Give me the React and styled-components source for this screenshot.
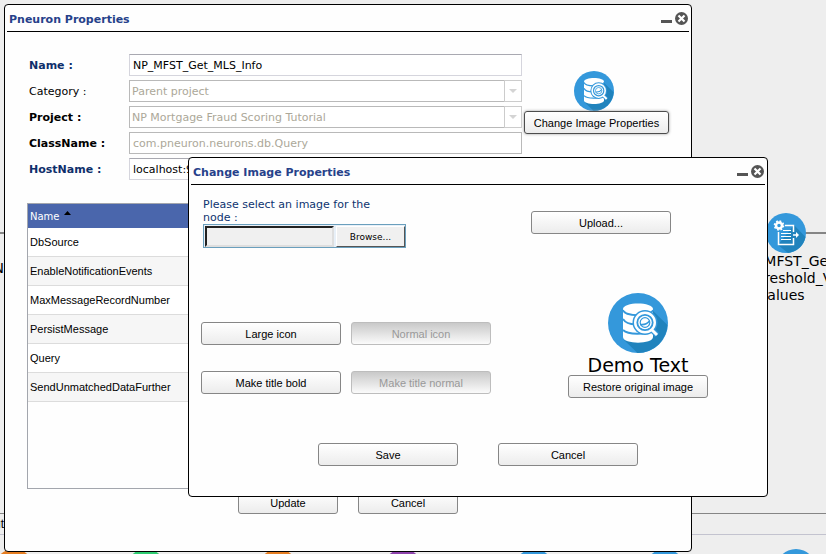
import React, { useRef, useState } from "react";
import styled, { createGlobalStyle } from "styled-components";

const GlobalStyle = createGlobalStyle`
  * { box-sizing: border-box; }
  body {
    margin: 0;
    background: #eeeeee;
    color: #000;
    font-family: "DejaVu Sans", sans-serif;
    font-size: 11px;
  }
`;

const Desktop = styled.main`
  position: relative;
  min-height: 100vh;
  overflow: hidden;
`;

const Connector = styled.div`
  position: absolute;
  left: 0;
  right: 0;
  top: ${(p) => p.$y}px;
  height: ${(p) => p.$weight}px;
  background: ${(p) => p.$color};
`;

const NodeDot = styled.div`
  position: absolute;
  left: ${(p) => p.$x}px;
  top: 549px;
  width: 40px;
  height: 40px;
  border-radius: 50%;
  background: ${(p) => p.$color};
`;

const CanvasNode = styled.div`
  position: absolute;
  left: ${(p) => p.$x}px;
  top: ${(p) => p.$y}px;
  width: 120px;
  display: flex;
  flex-direction: column;
  align-items: center;
  font-size: 14px;
  line-height: 17px;
  text-align: center;
`;

const CanvasText = styled.span`
  position: absolute;
  right: calc(100% - 4px);
  top: ${(p) => p.$y}px;
  font-family: ${(p) => (p.$label ? '"Liberation Sans", sans-serif' : "inherit")};
  font-size: ${(p) => (p.$label ? 12 : 14)}px;
  line-height: 17px;
`;

const Window = styled.section`
  position: absolute;
  left: ${(p) => p.$left}px;
  right: ${(p) => p.$right}px;
  top: ${(p) => p.$top}px;
  display: flex;
  flex-direction: column;
  background: #fefefe;
  border: 1px solid #000;
  border-radius: 4px;
`;

const TitleBar = styled.header`
  display: flex;
  align-items: center;
  height: 27px;
  margin: 0 2px;
  padding: 2px 1px 0 2px;
  border-bottom: 1px solid #000;
`;

const Title = styled.h2`
  flex: 1;
  margin: 0;
  padding-top: 2px;
  font-size: 11px;
  line-height: 14px;
  color: #26418a;
`;

const WindowButton = styled.button`
  display: flex;
  padding: 0;
  border: 0;
  background: none;
`;

const Button = styled.button`
  width: ${(p) => p.$width || 140}px;
  height: 23px;
  padding: 0;
  border: 1px solid ${(p) => (p.$focused ? "#4c4c4c" : "#868686")};
  border-radius: 3px;
  background: linear-gradient(#ffffff, #ececec);
  box-shadow: ${(p) => (p.$focused ? "0 0 3px #999" : "none")};
  color: #000;
  font-family: "Liberation Sans", Arial, sans-serif;
  font-size: 11px;

  &:disabled {
    border-color: #bdbdbd;
    background: linear-gradient(#c9c9c9, #fbfbfb);
    color: #999;
  }
`;

const PropertiesTop = styled.div`
  display: flex;
  gap: 2px;
  padding: 22px 22px 0 24px;
`;

const Fields = styled.div`
  flex: 1;
  display: grid;
  grid-template-columns: 100px 1fr;
  grid-auto-rows: 22px;
  row-gap: 4px;
  align-items: center;
`;

const FieldLabel = styled.label`
  font-weight: ${(p) => (p.$bold ? "bold" : "normal")};
  color: ${(p) => (p.$required ? "#0e2f6b" : "#000")};
`;

const TextField = styled.input`
  width: 100%;
  height: 22px;
  padding: 0 3px;
  border: 1px solid #d5d5dd;
  border-top-color: #a9a9b1;
  background: #fff;
  color: #000;
  font-family: inherit;
  font-size: 11px;

  &:disabled {
    border-color: #b9b9b9;
    color: #aca899;
  }
`;

const SelectFrame = styled.div`
  position: relative;
  height: 22px;
`;

const SelectField = styled.select`
  appearance: none;
  width: 100%;
  height: 22px;
  padding: 0 20px 0 2px;
  border: 1px solid #b9b9b9;
  background: #fff;
  color: #aca899;
  font-family: inherit;
  font-size: 11px;
  opacity: 1;
`;

const SelectArrow = styled.span`
  position: absolute;
  top: 0;
  right: 0;
  display: flex;
  align-items: center;
  justify-content: center;
  width: 18px;
  height: 22px;
  border: 1px solid #ccc;
  pointer-events: none;
`;

const NodeImage = styled.div`
  display: flex;
  flex-direction: column;
  align-items: center;
  width: 145px;
  padding-top: 17px;

  svg { margin-right: 5px; }
`;

const TableFrame = styled.div`
  height: 286px;
  margin: 23px 22px 0;
  border: 1px solid #a3a6ad;
`;

const PropertyTable = styled.table`
  width: 100%;
  border-collapse: separate;
  border-spacing: 0;
  font-family: "Liberation Sans", Arial, sans-serif;
  font-size: 11px;
  text-align: left;
`;

const HeadCell = styled.th`
  height: 24px;
  padding: 0 2px;
  background: #4a66ac;
  color: #fff;
  font-family: "DejaVu Sans", sans-serif;
  font-size: 10px;
  font-weight: normal;

  svg { margin: 0 0 5px 4px; }
`;

const PropertyRow = styled.tr`
  background: #fff;
  &:nth-child(even) { background: #f6f6f6; }
`;

const Cell = styled.td`
  height: 29px;
  padding: 0 2px;
  border-bottom: 1px solid #dcdcdc;
`;

const Footer = styled.footer`
  display: flex;
  justify-content: center;
  gap: ${(p) => p.$gap}px;
  padding: ${(p) => p.$padding};
`;

const DialogRow = styled.div`
  display: flex;
  justify-content: space-between;
  align-items: flex-start;
  padding: ${(p) => p.$padding};
`;

const FilePicker = styled.div`
  width: 203px;
`;

const FileLabel = styled.label`
  display: block;
  width: 180px;
  line-height: 13px;
  color: #0d3470;
`;

const FileControl = styled.div`
  display: flex;
  gap: 2px;
  height: 24px;
  padding: 1px 0 0 1px;
  border: 1px solid #6a9fbd;
  background: #e8f0f8;
`;

const FileName = styled.input`
  flex: 1;
  min-width: 0;
  border: 2px solid #dedede;
  border-top-color: #222;
  border-left-color: #222;
  background: #f0f0f0;
`;

const BrowseButton = styled.button`
  width: 69px;
  padding: 0;
  border: 1px solid #fff;
  border-right-color: #555;
  border-bottom-color: #555;
  background: #f0f0f0;
  color: #000;
  font-family: "DejaVu Sans", sans-serif;
  font-size: 9px;
`;

const Options = styled.div`
  display: grid;
  grid-template-columns: 140px 140px;
  gap: 26px 10px;
  padding-top: 29px;
`;

const Preview = styled.figure`
  display: flex;
  flex-direction: column;
  align-items: center;
  margin: 0;
`;

const Caption = styled.figcaption`
  padding-top: 2px;
  font-size: 19px;
  line-height: 20px;
`;

function DatabaseIcon({ size }) {
  return (
    <svg width={size} height={size} viewBox="0 0 60 60" aria-hidden="true">
      <circle cx="30" cy="30" r="30" fill="#3498db" />
      <path d="M44 17 59.500 32A30 30 0 0 1 29.500 60L16 47Z" fill="#2083bd" />
      <path d="M15 16C15 8.500 45 8.500 45 16V44C45 51.500 15 51.500 15 44Z" fill="#fff" />
      <path d="M15 17C17 24 43 24 45 17M15 26C18 31 25 32 33 31M15 37C20 42 38 42 45 37" fill="none" stroke="#3498db" strokeWidth="1.800" />
      <circle cx="37" cy="29.500" r="12.500" fill="#3498db" />
      <path d="m43 36 6 6" stroke="#3498db" strokeWidth="5.500" />
      <circle cx="37" cy="29.500" r="9.800" fill="#3498db" stroke="#fff" strokeWidth="2.400" />
      <path d="m43.500 36.500 5.500 5.500" stroke="#fff" strokeWidth="3" />
      <circle cx="37" cy="29.500" r="6.800" fill="#fff" />
      <circle cx="37" cy="29.500" r="4.800" fill="none" stroke="#3498db" strokeWidth="1.200" />
      <path d="M32.500 31.500C36 32 39 31 41.500 28" fill="none" stroke="#3498db" strokeWidth="1.600" />
    </svg>
  );
}

function DocumentIcon() {
  return (
    <svg width="40" height="40" viewBox="0 0 40 40" aria-hidden="true">
      <circle cx="20" cy="20" r="20" fill="#3498db" />
      <path d="M28 12 39.500 24A20 20 0 0 1 22 40L12 32Z" fill="#2083bd" />
      <path d="M19 12.500H27.500V19M27.500 25V31.500H12.500V19" fill="none" stroke="#fff" strokeWidth="1.500" />
      <path d="M17 17.500H25M15 20.500H25M15 23.500H25M15 26.500H25" stroke="#fff" />
      <path d="M27 22H31" stroke="#fff" strokeWidth="1.500" />
      <path d="m30 19 3 3-3 3z" fill="#fff" />
      <circle cx="13" cy="12.500" r="3" fill="none" stroke="#fff" strokeWidth="2.500" />
      <circle cx="13" cy="12.500" r="4.500" fill="none" stroke="#fff" strokeWidth="1.600" strokeDasharray="1.800 1.734" />
    </svg>
  );
}

function WindowTitle({ children }) {
  return (
    <TitleBar>
      <Title>{children}</Title>
      <WindowButton type="button" aria-label="Minimize">
        <svg width="14" height="14" viewBox="0 0 14 14"><path d="M1 8H12V11H1Z" fill="#555" /></svg>
      </WindowButton>
      <WindowButton type="button" aria-label="Close">
        <svg width="14" height="14" viewBox="0 0 14 14">
          <circle cx="7.500" cy="6.500" r="6.500" fill="#555" />
          <path d="m4.500 3.500 6 6m0-6-6 6" stroke="#fff" strokeWidth="2.200" />
        </svg>
      </WindowButton>
    </TitleBar>
  );
}

function DisabledSelect({ id, value }) {
  return (
    <SelectFrame>
      <SelectField id={id} disabled defaultValue={value}>
        <option>{value}</option>
      </SelectField>
      <SelectArrow>
        <svg width="8" height="4" viewBox="0 0 8 4"><path d="M0 0H8L4 4Z" fill="#d4d4d4" /></svg>
      </SelectArrow>
    </SelectFrame>
  );
}

const properties = [
  "DbSource",
  "EnableNotificationEvents",
  "MaxMessageRecordNumber",
  "PersistMessage",
  "Query",
  "SendUnmatchedDataFurther",
];

const dots = [
  [-6, "#e67e22"],
  [126, "#2ecc71"],
  [258, "#e67e22"],
  [383, "#8e44ad"],
  [514, "#3498db"],
  [645, "#3498db"],
  [776, "#3498db"],
];

function PneuronProperties() {
  return (
    <Window $left={4} $right={134} $top={4}>
      <WindowTitle>Pneuron Properties</WindowTitle>
      <PropertiesTop>
        <Fields>
          <FieldLabel htmlFor="name" $bold $required>Name :</FieldLabel>
          <TextField id="name" defaultValue="NP_MFST_Get_MLS_Info" />
          <FieldLabel htmlFor="category">Category :</FieldLabel>
          <DisabledSelect id="category" value="Parent project" />
          <FieldLabel htmlFor="project" $bold>Project :</FieldLabel>
          <DisabledSelect id="project" value="NP Mortgage Fraud Scoring Tutorial" />
          <FieldLabel htmlFor="class" $bold>ClassName :</FieldLabel>
          <TextField id="class" disabled defaultValue="com.pneuron.neurons.db.Query" />
          <FieldLabel htmlFor="host" $bold $required>HostName :</FieldLabel>
          <TextField id="host" defaultValue="localhost:9" />
        </Fields>
        <NodeImage>
          <DatabaseIcon size={40} />
          <Button type="button" $width={145} $focused>Change Image Properties</Button>
        </NodeImage>
      </PropertiesTop>
      <TableFrame>
        <PropertyTable>
          <thead>
            <tr>
              <HeadCell>
                Name
                <svg width="7" height="4" viewBox="0 0 7 4"><path d="M0 4H7L3.500 0Z" fill="#000" /></svg>
              </HeadCell>
            </tr>
          </thead>
          <tbody>
            {properties.map((name) => (
              <PropertyRow key={name}><Cell>{name}</Cell></PropertyRow>
            ))}
          </tbody>
        </PropertyTable>
      </TableFrame>
      <Footer $gap={20} $padding="2px 0 37px">
        <Button type="button" $width={100}>Update</Button>
        <Button type="button" $width={100}>Cancel</Button>
      </Footer>
    </Window>
  );
}

function ChangeImageProperties() {
  const picker = useRef(null);
  const [fileName, setFileName] = useState("");
  return (
    <Window $left={188} $right={58} $top={157}>
      <WindowTitle>Change Image Properties</WindowTitle>
      <DialogRow $padding="13px 96px 0 14px">
        <FilePicker>
          <FileLabel htmlFor="file-name">Please select an image for the node :</FileLabel>
          <FileControl>
            <FileName id="file-name" readOnly value={fileName} />
            <BrowseButton type="button" onClick={() => picker.current.click()}>Browse...</BrowseButton>
            <input
              ref={picker}
              type="file"
              hidden
              onChange={(e) => setFileName(e.target.files[0]?.name || "")}
            />
          </FileControl>
        </FilePicker>
        <Footer $padding="13px 0 0"><Button type="button">Upload...</Button></Footer>
      </DialogRow>
      <DialogRow $padding="45px 59px 0 12px">
        <Options>
          <Button type="button">Large icon</Button>
          <Button type="button" disabled>Normal icon</Button>
          <Button type="button">Make title bold</Button>
          <Button type="button" disabled>Make title normal</Button>
        </Options>
        <Preview>
          <DatabaseIcon size={60} />
          <Caption>Demo Text</Caption>
          <Button type="button">Restore original image</Button>
        </Preview>
      </DialogRow>
      <Footer $gap={40} $padding="45px 0 30px">
        <Button type="button">Save</Button>
        <Button type="button">Cancel</Button>
      </Footer>
    </Window>
  );
}

export default function App() {
  return (
    <>
      <GlobalStyle />
      <Desktop>
        <Connector $y={232} $weight={2} $color="#858585" />
        <Connector $y={513} $weight={1} $color="#858585" />
        <Connector $y={534} $weight={1} $color="#c3c3cf" />
        <CanvasText $y={260}>N</CanvasText>
        <CanvasText $y={516} $label>Output</CanvasText>
        {dots.map(([x, color]) => (
          <NodeDot key={x} $x={x} $color={color} />
        ))}
        <CanvasNode $x={726} $y={213}>
          <DocumentIcon />
          <span>NP_MFST_Get<br />_Threshold_V<br />alues</span>
        </CanvasNode>
        <PneuronProperties />
        <ChangeImageProperties />
      </Desktop>
    </>
  );
}
